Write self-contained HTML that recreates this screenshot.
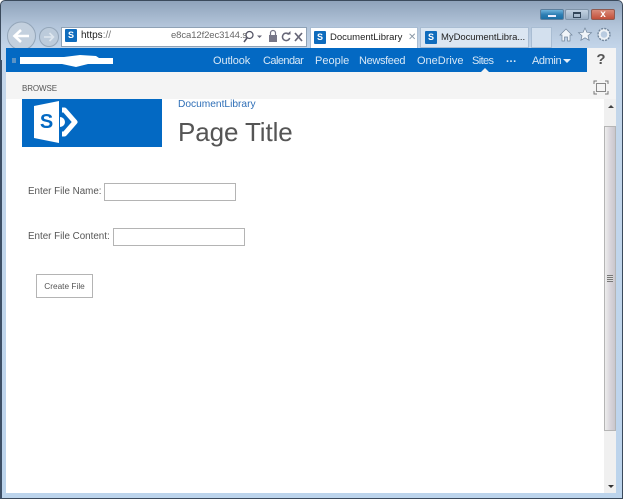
<!DOCTYPE html>
<html><head><meta charset="utf-8"><style>
html,body{margin:0;padding:0;width:623px;height:499px;overflow:hidden;background:#fff}
body{position:relative;font-family:"Liberation Sans",sans-serif}
div,span,a{position:absolute;white-space:nowrap;box-sizing:border-box}
.n{color:#d8e8f6;font-size:11px;top:54px;line-height:14px}
.f{font-size:9.8px;color:#555;line-height:14px}
.inp{background:#fff;border:1px solid #b4b4b4;height:18px}
.tab{top:27px;height:21px;border:1px solid #a9bdd3}
.sp{width:12px;height:13px;background:#0f6cbd;color:#fff;font-size:9px;font-weight:bold;line-height:13px;text-align:center;border-radius:1px}
.tt{font-size:9.5px;line-height:14px;color:#222}
</style></head><body>
<div style="left:0;top:0;width:623px;height:499px;background:linear-gradient(#8fa3bb 0,#b3c5da 25px,#c4d6ea 48px,#bcd4ec 100%);border:1px solid #3b4a5c;border-radius:5px 5px 0 0"></div>
<div style="left:0;top:60px;width:2px;height:439px;background:#3d4f66"></div>
<div style="left:6px;top:48px;width:610px;height:445px;background:#fff"></div>

<!-- window buttons -->
<div style="left:540px;top:9px;width:24px;height:11px;background:linear-gradient(#6fb3dc,#2f7fb4 50%,#1c6ea4);border:1px solid #5c7f9e;border-radius:2px"></div>
<div style="left:548px;top:15px;width:8px;height:2px;background:#eef"></div>
<div style="left:565px;top:9px;width:24px;height:11px;background:linear-gradient(#c3d2e2,#99adc2);border:1px solid #7f93a8;border-radius:2px"></div>
<div style="left:573px;top:12px;width:8px;height:6px;border:1px solid #33465a;border-top-width:2px"></div>
<div style="left:591px;top:9px;width:24px;height:11px;background:linear-gradient(#d98a78,#c24f3a);border:1px solid #8f5a50;border-radius:2px"></div>
<div style="left:591px;top:8px;width:24px;height:13px;color:#fff;font-size:10px;font-weight:bold;text-align:center;line-height:13px">x</div>

<!-- back / forward -->
<svg style="position:absolute;left:0;top:18px" width="62" height="32" viewBox="0 0 62 32">
<circle cx="21.500" cy="18" r="14" fill="#c3d0de" stroke="#94a6b9" stroke-width="1"/>
<circle cx="49" cy="19" r="9.500" fill="#bccbdb" stroke="#94a6b9" stroke-width="1"/>
<path d="M29 18H15M21 12l-6.500 6 6.500 6" fill="none" stroke="#fff" stroke-width="2.600"/>
<path d="M44 19h9M49.500 15l4 4-4 4" fill="none" stroke="#dfe7ef" stroke-width="1.600"/>
</svg>

<!-- address bar -->
<div style="left:61px;top:27px;width:246px;height:20px;background:#fff;border:1px solid #8fa2b6"></div>
<div class="sp" style="left:65px;top:29px">S</div>
<div style="left:81px;top:29px;font-size:10px;line-height:14px;color:#222">https<span style="position:static;color:#777">://</span></div>
<div style="left:171px;top:29px;font-size:9.5px;line-height:14px;color:#666;letter-spacing:-.1px">e8ca12f2ec3144.s</div>
<svg style="position:absolute;left:242px;top:28px" width="64" height="18" viewBox="0 0 64 18">
<circle cx="7.500" cy="7" r="3.500" fill="none" stroke="#556" stroke-width="1.300"/><path d="M5 10l-3 4" stroke="#556" stroke-width="1.600"/>
<path d="M15 7.500h5l-2.500 2.500z" fill="#667"/>
<rect x="27" y="7" width="8" height="7" fill="#778"/><path d="M28.500 7V5a2.500 2.500 0 0 1 5 0v2" fill="none" stroke="#778" stroke-width="1.200"/>
<path d="M47 6.500a3.700 3.700 0 1 0 .7 3.500" fill="none" stroke="#667" stroke-width="1.500"/><path d="M44.500 6.500h4v-3.500z" fill="#667"/>
<path d="M53 5l7 8M60 5l-7 8" stroke="#667" stroke-width="1.700"/>
</svg>

<!-- tabs -->
<div class="tab" style="left:310px;width:108px;background:#fff;border-bottom:0"></div>
<div class="sp" style="left:314px;top:31px">S</div>
<div class="tt" style="left:330px;top:31px">DocumentLibrary</div>
<div style="left:408px;top:31px;font-size:10px;line-height:14px;color:#8b98a6">✕</div>
<div class="tab" style="left:420px;width:109px;background:#dbe6f2"></div>
<div class="sp" style="left:425px;top:31px">S</div>
<div class="tt" style="left:441px;top:31px;letter-spacing:-.05px">MyDocumentLibra...</div>
<div class="tab" style="left:531px;width:21px;background:#d3e0ee"></div>

<!-- toolbar icons -->
<svg style="position:absolute;left:558px;top:26px" width="56" height="18" viewBox="0 0 56 18">
<path d="M2 9l6-6 6 6h-2v6H9.500v-4h-3v4H4V9z" fill="#f1f5f9" stroke="#71859b" stroke-width=".7"/>
<path d="M27 2l1.900 4.300 4.600.4-3.500 3 1.100 4.600L27 11.800l-4.100 2.500 1.100-4.600-3.500-3 4.600-.4z" fill="#f1f5f9" stroke="#71859b" stroke-width=".7"/>
<circle cx="46" cy="8.500" r="4.500" fill="none" stroke="#eef2f6" stroke-width="2.400"/>
<circle cx="46" cy="8.500" r="6" fill="none" stroke="#71859b" stroke-width="1.400" stroke-dasharray="2 1.150"/>
</svg>

<!-- suite bar -->
<div style="left:6px;top:48px;width:581px;height:24px;background:#0369c3"></div>
<div style="left:587px;top:48px;width:29px;height:24px;background:#f4f4f4"></div>
<div style="left:594px;top:51px;width:14px;text-align:center;font-size:15px;font-weight:bold;line-height:18px;color:#555">?</div>
<div style="left:12px;top:58px;width:4px;height:5px;background:#5b93c5"></div>
<svg style="position:absolute;left:18px;top:53px" width="98" height="14" viewBox="0 0 98 14"><path d="M2 4h44l16-2 16 1 3 2h14v6H70l-12 3-14-3H2z" fill="#fff"/></svg>
<div class="n" style="left:213px;letter-spacing:-.1px">Outlook</div>
<div class="n" style="left:263px;letter-spacing:-.55px">Calendar</div>
<div class="n" style="left:315px;">People</div>
<div class="n" style="left:359px;letter-spacing:-.35px">Newsfeed</div>
<div class="n" style="left:417px;">OneDrive</div>
<div class="n" style="left:472px;letter-spacing:-.6px">Sites</div>
<div class="n" style="left:506px;font-weight:bold;letter-spacing:.5px;top:52px">...</div>
<div class="n" style="left:532px;letter-spacing:-.4px">Admin</div>
<div style="left:563px;top:59px;border:4px solid transparent;border-top-color:#e4eef8;border-bottom:0"></div>
<div style="left:481px;top:68px;border:4px solid transparent;border-bottom-color:#f4f4f4;border-top:0"></div>

<!-- ribbon -->
<div style="left:6px;top:72px;width:610px;height:27px;background:#f4f4f4"></div>
<div style="left:22px;top:83px;font-size:8px;line-height:11px;color:#555;letter-spacing:-.1px">BROWSE</div>
<svg style="position:absolute;left:593px;top:80px" width="16" height="15" viewBox="0 0 16 15"><path d="M1 4V1h3M12 1h3v3M15 11v3h-3M4 14H1v-3" fill="none" stroke="#777" stroke-width="1"/><rect x="3.500" y="3.500" width="9" height="8" fill="none" stroke="#888"/></svg>

<!-- scrollbar -->
<div style="left:604px;top:99px;width:12px;height:394px;background:#f0f0f0"></div>
<div style="left:604px;top:126px;width:12px;height:305px;background:linear-gradient(90deg,#ededed,#d9d6dc 50%,#c9c6cc);border:1px solid #b5b5b5"></div>
<div style="left:607px;top:275px;width:6px;height:7px;background:repeating-linear-gradient(#777 0,#777 1px,#ddd 1px,#ddd 2px)"></div>
<div style="left:608px;top:105px;border:3px solid transparent;border-bottom:3px solid #444;border-top:0"></div>
<div style="left:608px;top:485px;border:3px solid transparent;border-top:3px solid #333;border-bottom:0"></div>

<!-- site logo -->
<div style="left:22px;top:99px;width:140px;height:48px;background:#0369c3"></div>
<svg style="position:absolute;left:25px;top:97px" width="60" height="50" viewBox="0 0 60 50">
<path d="M9 9L34 4V46L9 41z" fill="#fff"/>
<path d="M37 13h2.500L50 25 39.500 37H37" fill="none" stroke="#fff" stroke-width="5" stroke-linejoin="round"/>
<path d="M35 20a5 5 0 0 1 0 10z" fill="#fff"/>
</svg>
<div style="left:34px;top:109px;width:25px;text-align:center;font-size:20px;font-weight:bold;line-height:26px;color:#0369c3">S</div>

<!-- title -->
<div style="left:178px;top:98px;font-size:10.2px;line-height:14px;color:#2f6fb7">DocumentLibrary</div>
<div style="left:178px;top:114px;font-size:26px;line-height:36px;color:#555;font-weight:normal;letter-spacing:-.1px">Page Title</div>

<!-- form -->
<div class="f" style="left:28px;top:185px">Enter File Name:</div>
<div class="inp" style="left:104px;top:183px;width:132px"></div>
<div class="f" style="left:28px;top:230px">Enter File Content:</div>
<div class="inp" style="left:113px;top:228px;width:132px"></div>
<div style="left:36px;top:274px;width:57px;height:24px;border:1px solid #b4b4b4;background:#fff;font-size:8.300px;color:#555;text-align:center;line-height:22px">Create File</div>
</body></html>
